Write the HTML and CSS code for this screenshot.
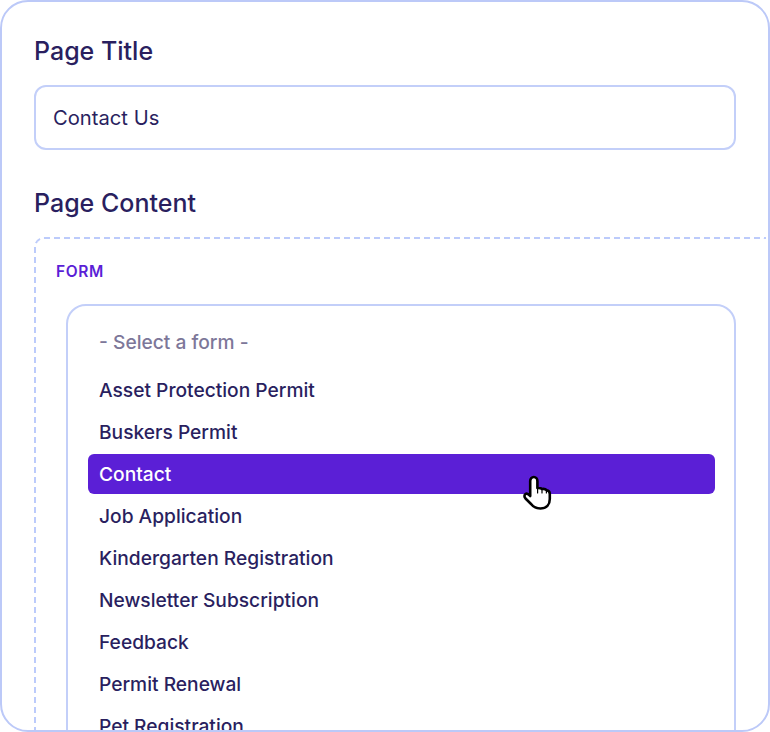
FILE: index.html
```html
<!DOCTYPE html>
<html>
  <head>
    <link rel="stylesheet" href="styles.css">
  </head>
  <body>
    <div class="card">
      <div class="field-label">Page Title</div>
      <div class="text-input">Contact Us</div>

      <div class="field-label content-label">Page Content</div>

      <!-- Form block -->
      <div class="block">
        <div class="block-type">FORM</div>
        <div class="select-menu">
          <div class="option placeholder">- Select a form -</div>
          <div class="option">Asset Protection Permit</div>
          <div class="option">Buskers Permit</div>
          <div class="option selected">
            Contact
            <svg class="cursor" width="30" height="36" viewBox="0 0 30 36">
              <path d="M8.2 21V6C8.2 3.6 9.8 2 11.8 2C13.8 2 15.4 3.6 15.4 6V13C17.4 12.8 19 13 20 14C22 13.7 23.6 14 24.6 15.2C26.6 15.4 27.8 16.6 27.8 19V24C27.8 29.5 24.5 33.5 18.5 33.5C14 33.5 11.5 32 9.3 29.2L3.5 23.5C2 21.8 2.2 20 3.5 19C5 18 6.8 19.4 8.2 21Z" fill="#fff" stroke="#000" stroke-width="2.6" stroke-linejoin="round"/>
              <path d="M15.6 14V18M20 14.5V18M24.4 15.5V18" fill="none" stroke="#000" stroke-width="1.2" stroke-linecap="round"/>
            </svg>
          </div>
          <div class="option">Job Application</div>
          <div class="option">Kindergarten Registration</div>
          <div class="option">Newsletter Subscription</div>
          <div class="option">Feedback</div>
          <div class="option">Permit Renewal</div>
          <div class="option">Pet Registration</div>
        </div>
      </div>
    </div>
  </body>
</html>
```

FILE: styles.css
```css
* {
  margin: 0;
  padding: 0;
  box-sizing: border-box;
}

html,
body {
  height: 732px;
  overflow: hidden;
  background: #ffffff;
}

body {
  font-family: "Inter", "Noto Sans", sans-serif;
  color: #2a1f5f;
}

.card {
  width: 770px;
  height: 732px;
  border: 2px solid #bcc9f8;
  border-radius: 28px;
  padding: 32px 32px 0;
  overflow: hidden;
  background: #ffffff;
}

.field-label {
  font-size: 25px;
  font-weight: 500;
  line-height: 34px;
}

.text-input {
  height: 65px;
  margin-top: 17px;
  padding: 0 17px;
  display: flex;
  align-items: center;
  font-size: 20.2px;
  border: 2px solid #c3cff9;
  border-radius: 12px;
}

.content-label {
  margin-top: 36px;
}

.block {
  margin-top: 17px;
  margin-right: -32px;
  width: 732px;
  padding: 24px 31px 0 20px;
  border: 2px dashed #bccbfb;
  border-right: none;
  border-bottom: none;
  border-top-left-radius: 10px;
}

.block-type {
  font-size: 15.5px;
  font-weight: 600;
  line-height: 18px;
  letter-spacing: 0.6px;
  color: #5b1fd6;
}

.select-menu {
  margin-top: 23px;
  margin-left: 10px;
  width: 670px;
  height: 500px;
  padding: 16px 19px 0 20px;
  border: 2px solid #c3cff9;
  border-radius: 20px;
}

.option {
  position: relative;
  height: 40px;
  margin-bottom: 2px;
  padding: 0 11px;
  display: flex;
  align-items: center;
  font-size: 19.2px;
  font-weight: 480;
  border-radius: 6px;
}

.placeholder {
  margin-bottom: 8px;
  color: #7d7799;
}

.selected {
  background: #5b1fd6;
  color: #ffffff;
}

.cursor {
  position: absolute;
  left: 434px;
  top: 21px;
}
```
